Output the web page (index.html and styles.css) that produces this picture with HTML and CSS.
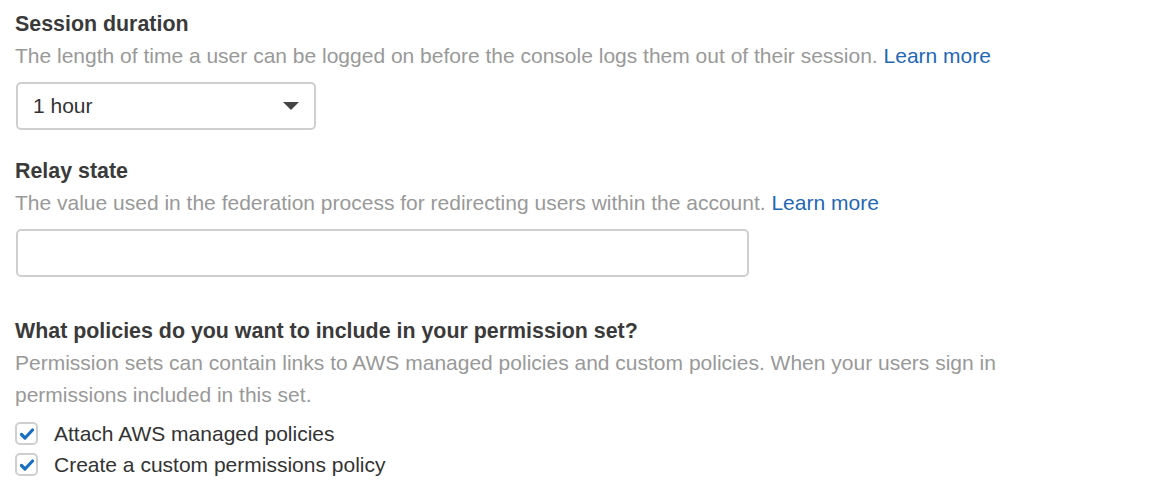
FILE: index.html
```html
<!DOCTYPE html>
<html>
<head>
<meta charset="utf-8">
<link rel="stylesheet" href="styles.css">
</head>
<body>
<div class="page">
  <section class="field">
    <div class="label">Session duration</div>
    <div class="desc">The length of time a user can be logged on before the console logs them out of their session. <a class="link" href="#">Learn more</a></div>
    <div class="select">
      <span>1 hour</span>
      <svg class="caret" width="16" height="8" viewBox="0 0 16 8"><path d="M0 0H16L8 8Z" fill="#444"/></svg>
    </div>
  </section>
  <section class="field">
    <div class="label">Relay state</div>
    <div class="desc">The value used in the federation process for redirecting users within the account. <a class="link" href="#">Learn more</a></div>
    <div class="input"></div>
  </section>
  <section class="field policies">
    <div class="label">What policies do you want to include in your permission set?</div>
    <div class="desc wrap">Permission sets can contain links to AWS managed policies and custom policies. When your users sign in permissions included in this set.</div>
    <div class="checks">
      <label class="check"><span class="box"><svg width="14" height="12" viewBox="0 0 14 12"><path d="M1.5 6.5L5 10L12.5 2" fill="none" stroke="#1a6fc0" stroke-width="3.2" stroke-linecap="round" stroke-linejoin="round"/></svg></span><span>Attach AWS managed policies</span></label>
      <label class="check"><span class="box"><svg width="14" height="12" viewBox="0 0 14 12"><path d="M1.5 6.5L5 10L12.5 2" fill="none" stroke="#1a6fc0" stroke-width="3.2" stroke-linecap="round" stroke-linejoin="round"/></svg></span><span>Create a custom permissions policy</span></label>
    </div>
  </section>
</div>
</body>
</html>
```

FILE: styles.css
```css
html, body {
  margin: 0;
  padding: 0;
  background: #fff;
}
.page {
  font-family: "Liberation Sans", Arial, sans-serif;
  font-size: 21px;
  padding: 8px 0 0 15px;
  color: #444;
}
.field {
  display: flex;
  flex-direction: column;
  align-items: flex-start;
}
.field + .field {
  margin-top: 25px;
}
.field.policies {
  margin-top: 38px;
}
.label {
  font-weight: bold;
  font-size: 21.4px;
  line-height: 32px;
  color: #3a3a3a;
}
.desc {
  line-height: 32px;
  color: #999;
}
.desc.wrap {
  width: 1000px;
}
.link {
  color: #1f68b5;
  text-decoration: none;
}
.select {
  margin-top: 10px;
  margin-left: 1px;
  box-sizing: border-box;
  width: 300px;
  height: 48px;
  border: 2px solid #cfcfcf;
  border-radius: 5px;
  display: flex;
  align-items: center;
  justify-content: space-between;
  padding: 0 15px 0 15px;
  color: #333;
}
.caret {
  display: block;
}
.input {
  margin-top: 10px;
  margin-left: 1px;
  box-sizing: border-box;
  width: 733px;
  height: 48px;
  border: 2px solid #cfcfcf;
  border-radius: 5px;
}
.checks {
  display: flex;
  flex-direction: column;
  margin-top: 7px;
}
.check {
  display: flex;
  align-items: center;
  gap: 16px;
  line-height: 31px;
  color: #333;
}
.box {
  box-sizing: border-box;
  width: 23px;
  height: 23px;
  border: 2px solid #cfcfcf;
  border-radius: 5px;
  display: flex;
  align-items: center;
  justify-content: center;
}
.box svg {
  display: block;
}
```
